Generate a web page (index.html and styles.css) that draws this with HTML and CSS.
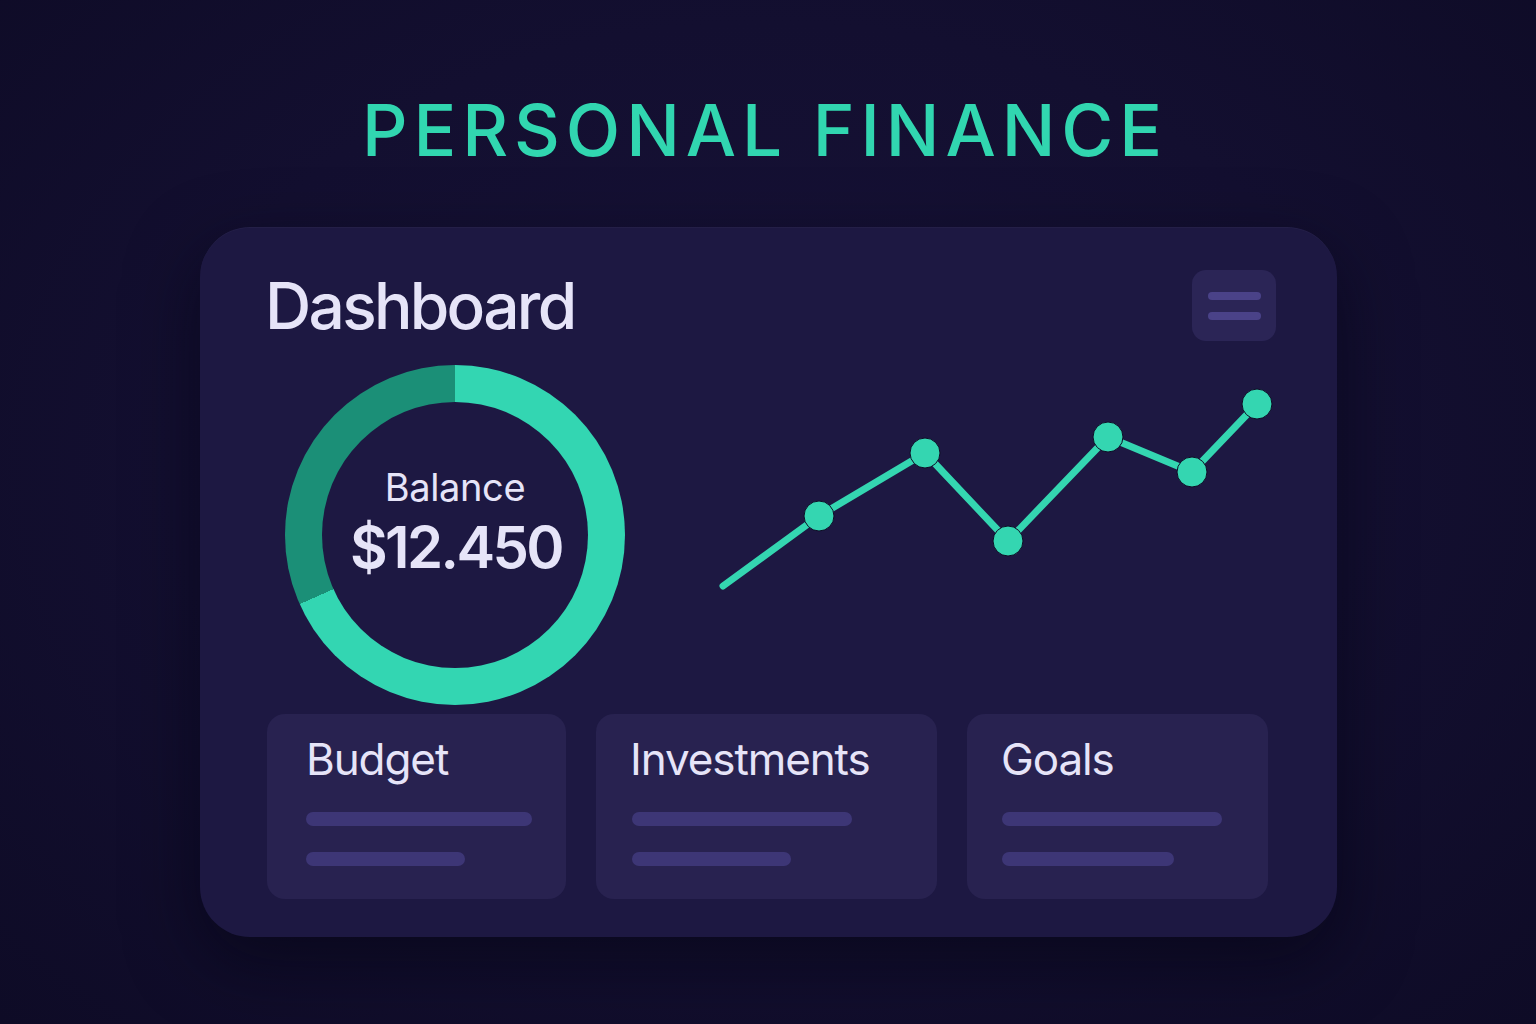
FILE: index.html
```html
<!DOCTYPE html>
<html lang="en">
<head>
<meta charset="utf-8">
<title>Personal Finance</title>
<link rel="stylesheet" href="styles.css">
</head>
<body>
<main class="page">
  <h1 class="title">PERSONAL FINANCE</h1>
  <section class="dash">
    <header class="dash-head">
      <h2 class="dash-title">Dashboard</h2>
      <button class="menu" aria-label="Menu"><span></span><span></span></button>
    </header>
    <div class="dash-main">
      <div class="donut">
        <div class="donut-hole">
          <div class="donut-label">Balance</div>
          <div class="donut-value">$12.450</div>
        </div>
      </div>
      <svg class="chart" viewBox="0 0 636 340" width="636" height="340">
        <polyline points="83,221 179,151 285,88 368,176 468,72 552,107 617,39" fill="none" stroke="#34d6b1" stroke-width="7" stroke-linecap="round" stroke-linejoin="round"/>
        <g fill="#34d6b1" stroke="#0f0c26" stroke-width="1">
          <circle cx="179" cy="151" r="15"/>
          <circle cx="285" cy="88" r="15"/>
          <circle cx="368" cy="176" r="15"/>
          <circle cx="468" cy="72" r="15"/>
          <circle cx="552" cy="107" r="15"/>
          <circle cx="617" cy="39" r="15"/>
        </g>
      </svg>
    </div>
    <div class="tiles">
      <div class="tile tile-budget">
        <h3 class="tile-title">Budget</h3>
        <div class="bar" style="width:226px"></div>
        <div class="bar" style="width:159px"></div>
      </div>
      <div class="tile tile-invest">
        <h3 class="tile-title">Investments</h3>
        <div class="bar" style="width:220px"></div>
        <div class="bar" style="width:159px"></div>
      </div>
      <div class="tile tile-goals">
        <h3 class="tile-title">Goals</h3>
        <div class="bar" style="width:220px"></div>
        <div class="bar" style="width:172px"></div>
      </div>
    </div>
  </section>
</main>
</body>
</html>
```
FILE: styles.css
```css
* { box-sizing: border-box; }
html, body { margin: 0; padding: 0; }
body {
  width: 1536px;
  height: 1024px;
  overflow: hidden;
  background: radial-gradient(ellipse at 50% 45%, #171238 0%, #130f30 55%, #0e0b26 100%);
  font-family: Inter, "Open Sans", "Noto Sans", sans-serif;
  color: #e4e2f7;
}
.page {
  display: flex;
  flex-direction: column;
  align-items: center;
  padding-top: 94px;
}
.title {
  margin: 0 0 61px 0;
  font-size: 71px;
  line-height: 72px;
  font-weight: 500;
  letter-spacing: 0.083em;
  color: #31d6b0;
  margin-right: 6px;
}
.dash {
  width: 1137px;
  height: 710px;
  margin-left: 1px;
  background: #1d1842;
  border-radius: 50px;
  padding: 43px 61px 38px 65px;
  box-shadow: 0 24px 70px rgba(4, 3, 16, 0.55), inset 0 1px 0 rgba(255,255,255,0.03);
}
.dash-head {
  display: flex;
  align-items: center;
  justify-content: space-between;
  height: 71px;
}
.dash-title {
  margin: 0;
  font-size: 64px;
  line-height: 71px;
  font-weight: 500;
  letter-spacing: -0.042em;
  color: #e6e4f8;
}
.menu {
  width: 84px;
  height: 71px;
  border: none;
  border-radius: 14px;
  background: #2b2556;
  display: flex;
  flex-direction: column;
  align-items: center;
  justify-content: center;
  gap: 12px;
  padding: 0;
}
.menu span {
  display: block;
  width: 53px;
  height: 8px;
  border-radius: 4px;
  background: #4a4288;
}
.dash-main {
  display: flex;
  align-items: flex-start;
  gap: 15px;
  margin-top: 24px;
  height: 340px;
}
.donut {
  width: 340px;
  height: 340px;
  margin-left: 20px;
  border-radius: 50%;
  background: conic-gradient(#33d6b2 0deg 246deg, #1b8f77 246deg 360deg);
  display: flex;
  align-items: center;
  justify-content: center;
  flex: none;
}
.donut-hole {
  width: 266px;
  height: 266px;
  border-radius: 50%;
  background: #1d1842;
  display: flex;
  flex-direction: column;
  align-items: center;
  justify-content: center;
  padding-bottom: 26px;
}
.donut-label {
  font-size: 38px;
  line-height: 50px;
  font-weight: 400;
  letter-spacing: -0.01em;
  color: #e6e4f8;
}
.donut-value {
  font-size: 58px;
  line-height: 70px;
  font-weight: 600;
  letter-spacing: -0.045em;
  color: #e6e4f8;
  margin-left: 2px;
}
.chart { flex: none; display: block; }
.tiles {
  display: grid;
  grid-template-columns: 299px 341px 301px;
  gap: 30px;
  margin-top: 9px;
  margin-left: 2px;
}
.tile {
  height: 185px;
  background: #282250;
  border-radius: 18px;
  padding: 18px 20px 0 36px;
}
.tile-budget { padding-left: 39px; }
.tile-goals { padding-left: 35px; }
.tile-title {
  margin: 0 0 25px 0;
  font-size: 44px;
  line-height: 55px;
  font-weight: 400;
  letter-spacing: -0.025em;
  color: #e6e4f8;
}
.tile-invest .tile-title { margin-left: -2px; }
.tile-goals .tile-title { margin-left: -1px; }
.bar {
  height: 14px;
  border-radius: 7px;
  background: #3d3676;
  margin-bottom: 26px;
}
```
